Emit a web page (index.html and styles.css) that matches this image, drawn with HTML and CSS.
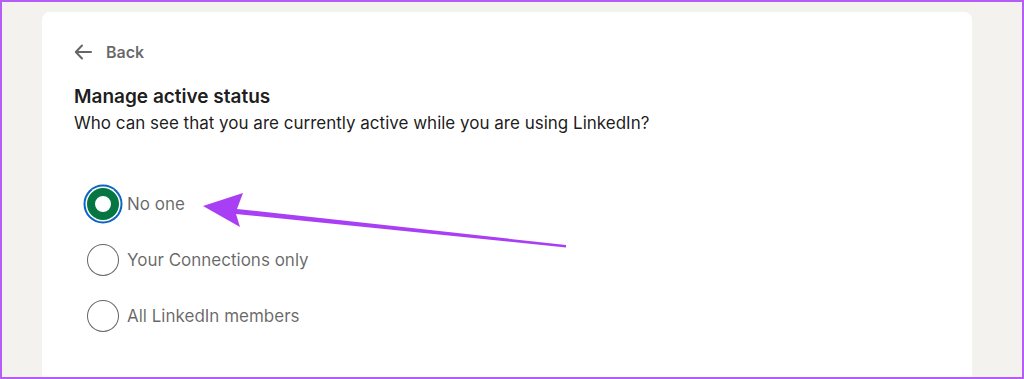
FILE: index.html
```html
<!DOCTYPE html>
<html lang="en">
<head>
<meta charset="utf-8">
<title>Manage active status</title>
<link rel="stylesheet" href="styles.css">
</head>
<body>
<div class="frame">
  <main class="card">
    <a class="back" href="#">
      <svg class="back-icon" width="18" height="16" viewBox="0 0 18 16" aria-hidden="true">
        <path d="M8 1.5 L1.8 8 L8 14.5 M2 8 H17" fill="none" stroke="#666" stroke-width="2" stroke-linecap="round" stroke-linejoin="round"/>
      </svg>
      <span>Back</span>
    </a>
    <h1 class="title">Manage active status</h1>
    <p class="subtitle">Who can see that you are currently active while you are using LinkedIn?</p>
    <div class="options">
      <label class="option">
        <span class="radio radio-checked"></span>
        <span class="option-label">No one</span>
      </label>
      <label class="option">
        <span class="radio"></span>
        <span class="option-label">Your Connections only</span>
      </label>
      <label class="option">
        <span class="radio"></span>
        <span class="option-label">All LinkedIn members</span>
      </label>
    </div>
  </main>
  <svg class="annotation" width="1024" height="379" viewBox="0 0 1024 379" aria-hidden="true">
    <path d="M203 206 L243 193 L237 209 L566 245 L566 247.5 L236 214 L240 227 Z" fill="#a93ff4"/>
  </svg>
</div>
</body>
</html>
```

FILE: styles.css
```css
* { box-sizing: border-box; }

html, body {
  margin: 0;
  padding: 0;
}

body {
  font-family: Inter, "Noto Sans", "Liberation Sans", sans-serif;
  background: #f3f2ef;
}

.frame {
  position: relative;
  width: 1024px;
  height: 379px;
  border: 2px solid #b65cf7;
  background: #f3f2ef;
  padding: 10px 0 0 40px;
  overflow: hidden;
}

.card {
  width: 930px;
  height: 400px;
  background: #ffffff;
  border-radius: 8px;
  padding: 29px 32px 0 32px;
}

.back {
  display: flex;
  align-items: center;
  gap: 14px;
  color: rgba(0, 0, 0, 0.6);
  text-decoration: none;
  font-size: 16px;
  font-weight: 600;
  line-height: 22px;
  height: 22px;
}

.back-icon { display: block; }

.title {
  margin: 22px 0 0 0;
  font-size: 19px;
  font-weight: 600;
  line-height: 24px;
  color: rgba(0, 0, 0, 0.9);
}

.subtitle {
  margin: 2px 0 0 0;
  font-size: 17px;
  line-height: 24px;
  color: rgba(0, 0, 0, 0.9);
}

.options {
  margin-top: 53px;
  display: flex;
  flex-direction: column;
  gap: 24px;
  padding-left: 13px;
}

.option {
  display: flex;
  align-items: center;
  gap: 8px;
  height: 32px;
  cursor: pointer;
}

.radio {
  width: 32px;
  height: 32px;
  border-radius: 50%;
  border: 1.5px solid rgba(0, 0, 0, 0.6);
  background: #fff;
  flex: none;
}

.radio-checked {
  border: 8px solid #057642;
  box-shadow: 0 0 0 1.5px #fff, 0 0 0 3.5px #0a66c2;
}

.option-label {
  font-size: 17px;
  line-height: 24px;
  color: rgba(0, 0, 0, 0.6);
}

.annotation {
  position: absolute;
  left: -2px;
  top: -2px;
  pointer-events: none;
}
```
